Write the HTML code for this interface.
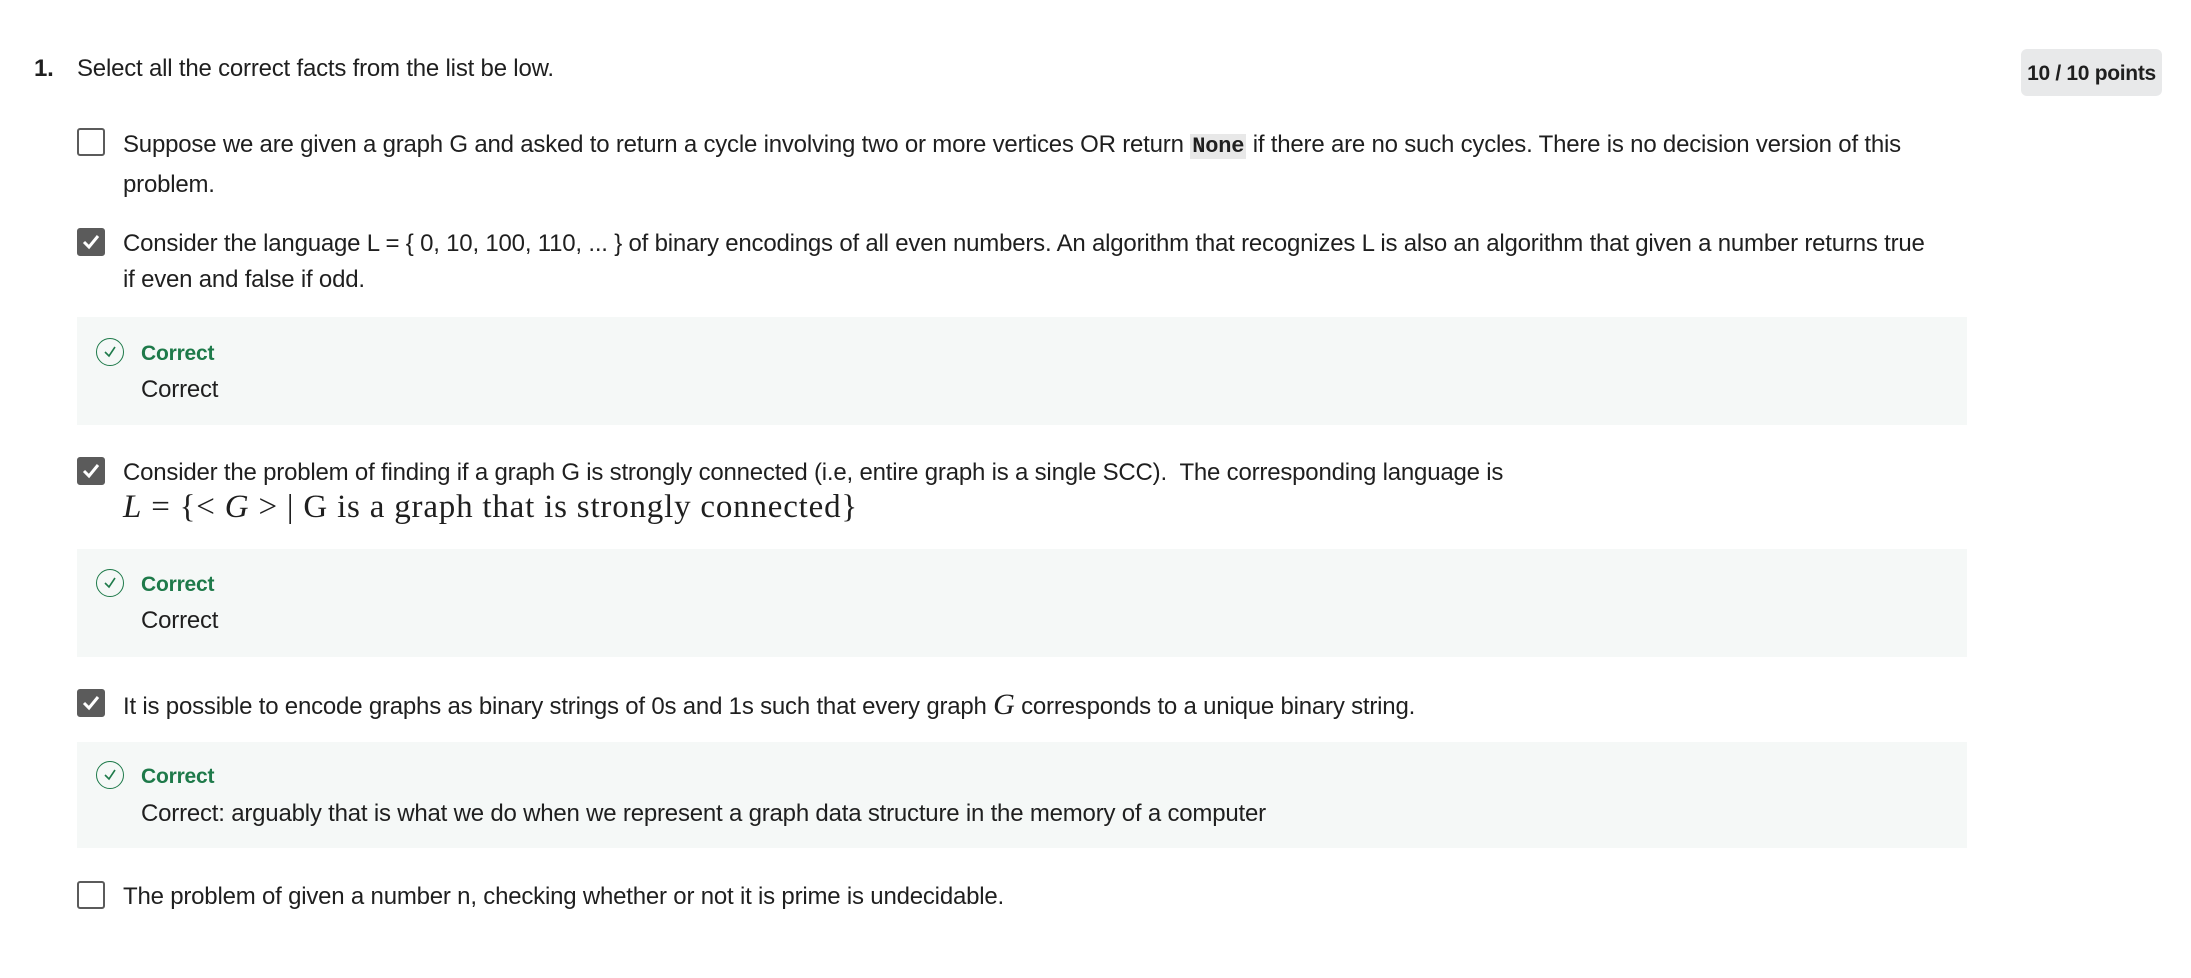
<!DOCTYPE html>
<html><head><meta charset="utf-8"><style>
body{margin:0;width:2191px;height:978px;background:#fff;font-family:"Liberation Sans",sans-serif;color:#1f1f1f;position:relative;overflow:hidden}
.a{position:absolute;white-space:nowrap;font-size:24px;line-height:30px;letter-spacing:-0.2px}
.cb{position:absolute;left:77px;width:24px;height:24px;border:2px solid #5b5b5b;border-radius:3px;background:#fff}
.cb.on{background:#5b5b5b}
.cb svg{position:absolute;left:2px;top:2px}
.fb{position:absolute;left:77px;width:1890px;background:#f5f8f7}
.ic{position:absolute;left:96px;width:26px;height:26px;border:1.6px solid #1e7a4a;border-radius:50%}
.g{color:#1e7a4a;font-weight:bold;font-size:21px}
code{font-family:"Liberation Mono",monospace;font-weight:bold;background:#e8e8e8;padding:0 2px;font-size:22px}
.m{font-family:"Liberation Serif",serif;font-size:33px;letter-spacing:0.8px}
</style></head><body>
<div class="a" style="left:34px;top:54px;font-weight:bold">1.</div>
<div class="a" style="left:77px;top:54px">Select all the correct facts from the list be low.</div>
<div style="position:absolute;left:2021px;top:49px;width:141px;height:47px;background:#e8e9ea;border-radius:6px;font-weight:bold;font-size:21px;line-height:49px;text-align:center;letter-spacing:-0.3px">10 / 10 points</div>

<div class="cb" style="top:128px"></div>
<div class="a" style="left:123px;top:130px">Suppose we are given a graph G and asked to return a cycle involving two or more vertices OR return <code>None</code> if there are no such cycles. There is no decision version of this</div>
<div class="a" style="left:123px;top:170px">problem.</div>

<div class="cb on" style="top:228px"><svg width="20" height="20" viewBox="0 0 20 20"><path d="M3 10l5 5 9-11" stroke="#fff" stroke-width="3" fill="none"/></svg></div>
<div class="a" style="left:123px;top:229px">Consider the language L = { 0, 10, 100, 110, ... } of binary encodings of all even numbers. An algorithm that recognizes L is also an algorithm that given a number returns true</div>
<div class="a" style="left:123px;top:265px">if even and false if odd.</div>

<div class="fb" style="top:317px;height:108px"></div>
<div class="ic" style="top:338px"><svg width="26" height="26" viewBox="0 0 26 26"><path d="M8 13l4 4 6-9" stroke="#1e7a4a" stroke-width="1.6" fill="none"/></svg></div>
<div class="a g" style="left:141px;top:339px">Correct</div>
<div class="a" style="left:141px;top:375px">Correct</div>

<div class="cb on" style="top:457px"><svg width="20" height="20" viewBox="0 0 20 20"><path d="M3 10l5 5 9-11" stroke="#fff" stroke-width="3" fill="none"/></svg></div>
<div class="a" style="left:123px;top:458px">Consider the problem of finding if a graph G is strongly connected (i.e, entire graph is a single SCC).&nbsp; The corresponding language is</div>
<div class="a m" style="left:123px;top:492px"><i>L</i> = {&lt; <i>G</i> &gt; | G is a graph that is strongly connected}</div>

<div class="fb" style="top:549px;height:108px"></div>
<div class="ic" style="top:569px"><svg width="26" height="26" viewBox="0 0 26 26"><path d="M8 13l4 4 6-9" stroke="#1e7a4a" stroke-width="1.6" fill="none"/></svg></div>
<div class="a g" style="left:141px;top:570px">Correct</div>
<div class="a" style="left:141px;top:606px">Correct</div>

<div class="cb on" style="top:689px"><svg width="20" height="20" viewBox="0 0 20 20"><path d="M3 10l5 5 9-11" stroke="#fff" stroke-width="3" fill="none"/></svg></div>
<div class="a" style="left:123px;top:690px">It is possible to encode graphs as binary strings of 0s and 1s such that every graph <i style="font-family:'Liberation Serif',serif;font-size:30px">G</i> corresponds to a unique binary string.</div>

<div class="fb" style="top:742px;height:106px"></div>
<div class="ic" style="top:761px"><svg width="26" height="26" viewBox="0 0 26 26"><path d="M8 13l4 4 6-9" stroke="#1e7a4a" stroke-width="1.6" fill="none"/></svg></div>
<div class="a g" style="left:141px;top:762px">Correct</div>
<div class="a" style="left:141px;top:799px">Correct: arguably that is what we do when we represent a graph data structure in the memory of a computer</div>

<div class="cb" style="top:881px"></div>
<div class="a" style="left:123px;top:882px">The problem of given a number n, checking whether or not it is prime is undecidable.</div>
</body></html>
